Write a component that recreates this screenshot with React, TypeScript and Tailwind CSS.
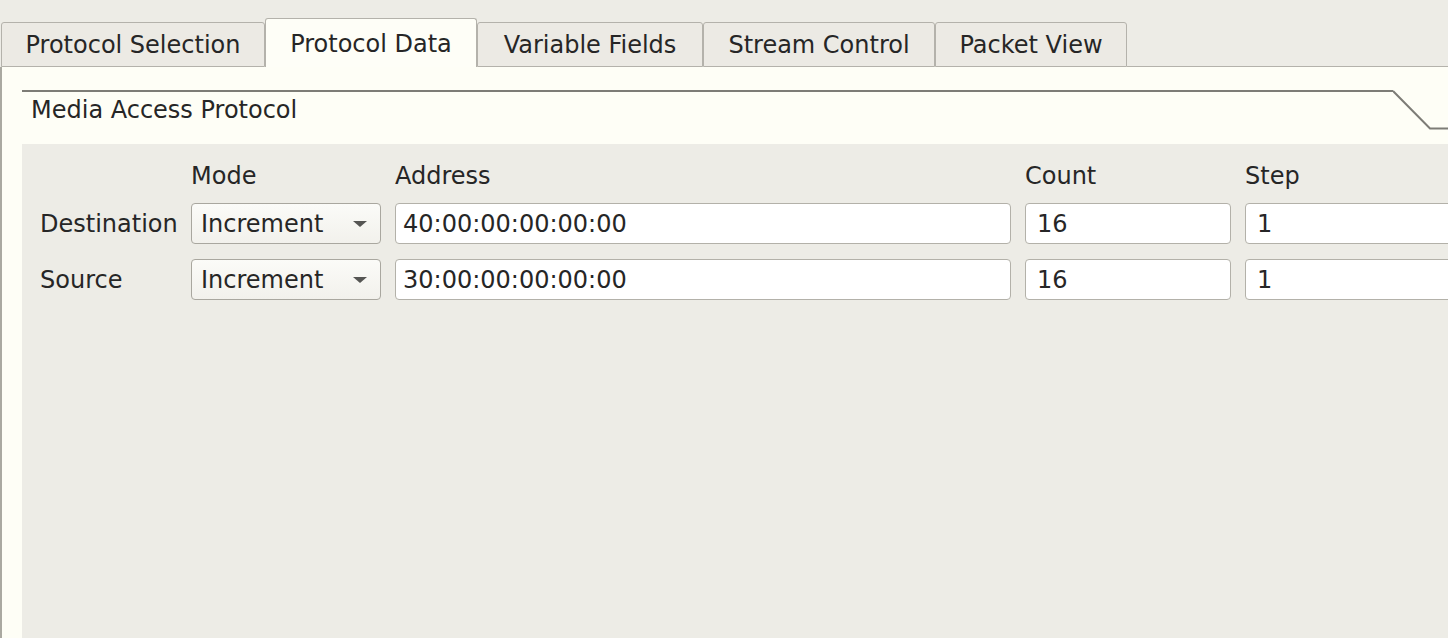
import React from "react";

const font = { fontFamily: '"DejaVu Sans", "Liberation Sans", sans-serif' };

function Tab({ label, width, active }: { label: string; width: number; active?: boolean }) {
  if (active) {
    return (
      <div
        className="flex h-[49px] shrink-0 items-start justify-center rounded-t-[3px] border-x border-t border-[#b4b2ab] bg-[#fefef7] pt-[11px] text-[24px] leading-[28px] text-[#262626]"
        style={{ width }}
      >
        {label}
      </div>
    );
  }
  return (
    <div
      className="flex h-[45px] shrink-0 items-center justify-center rounded-t-[3px] border-x border-t border-b border-[#b4b2ab] bg-[#eceae4] pt-[1px] text-[24px] leading-[28px] text-[#262626]"
      style={{ width }}
    >
      {label}
    </div>
  );
}

function Combo() {
  return (
    <div className="flex h-[41px] w-[190px] items-center justify-between rounded-[4px] border border-[#a9a79f] bg-gradient-to-b from-[#fbfbf8] to-[#f2f1ec] pl-[9px] pr-[12px] text-[24px] text-[#262626]">
      <span>Increment</span>
      <svg width="16" height="8" viewBox="0 0 16 8">
        <polygon points="1,1 15,1 8,7" fill="#555553" />
      </svg>
    </div>
  );
}

function Field({ value, w, pad }: { value: string; w: string; pad: string }) {
  return (
    <div className={`flex h-[41px] items-center rounded-[4px] border border-[#b3b1a9] bg-white text-[24px] text-[#262626] ${w} ${pad}`}>
      {value}
    </div>
  );
}

export default function App() {
  return (
    <div className="h-[638px] w-[1448px] overflow-hidden bg-[#edece6]" style={font}>
      {/* tab bar */}
      <div className="flex h-[67px] items-end pl-[1px]">
        <Tab label="Protocol Selection" width={264} />
        <Tab label="Protocol Data" width={212} active />
        <Tab label="Variable Fields" width={226} />
        <Tab label="Stream Control" width={232} />
        <Tab label="Packet View" width={192} />
        <div className="h-[1px] flex-1 bg-[#b4b2ab]" />
      </div>

      {/* pane */}
      <div className="h-[571px] border-l-2 border-[#aaa9a1] bg-[#fefef6] pl-[20px] pt-[23px]">
        {/* toolbox header */}
        <div className="flex h-[54px]">
          <div className="flex-1 border-t-2 border-[#7d7c76] pl-[9px] pt-[4px] text-[24px] leading-[28px] text-[#262626]">
            Media Access Protocol
          </div>
          <svg width="55" height="54" viewBox="0 0 55 54" className="shrink-0">
            <polyline points="0,1 37,38.5 55,38.5" fill="none" stroke="#7d7c76" strokeWidth="2" />
          </svg>
        </div>

        {/* content */}
        <div className="h-full bg-[#edece6] pl-[18px] pt-[18px] text-[24px] text-[#262626]">
          <div className="grid grid-cols-[137px_190px_616px_206px_220px] gap-x-[14px] gap-y-[15px]">
            <div className="h-[26px]" />
            <div className="h-[26px] leading-[28px]">Mode</div>
            <div className="h-[26px] leading-[28px]">Address</div>
            <div className="h-[26px] leading-[28px]">Count</div>
            <div className="h-[26px] leading-[28px]">Step</div>

            <div className="flex h-[41px] items-center">Destination</div>
            <Combo />
            <Field value="40:00:00:00:00:00" w="w-[616px]" pad="pl-[7px]" />
            <Field value="16" w="w-[206px]" pad="pl-[11px]" />
            <Field value="1" w="w-[220px]" pad="pl-[11px]" />

            <div className="flex h-[41px] items-center">Source</div>
            <Combo />
            <Field value="30:00:00:00:00:00" w="w-[616px]" pad="pl-[7px]" />
            <Field value="16" w="w-[206px]" pad="pl-[11px]" />
            <Field value="1" w="w-[220px]" pad="pl-[11px]" />
          </div>
        </div>
      </div>
    </div>
  );
}
